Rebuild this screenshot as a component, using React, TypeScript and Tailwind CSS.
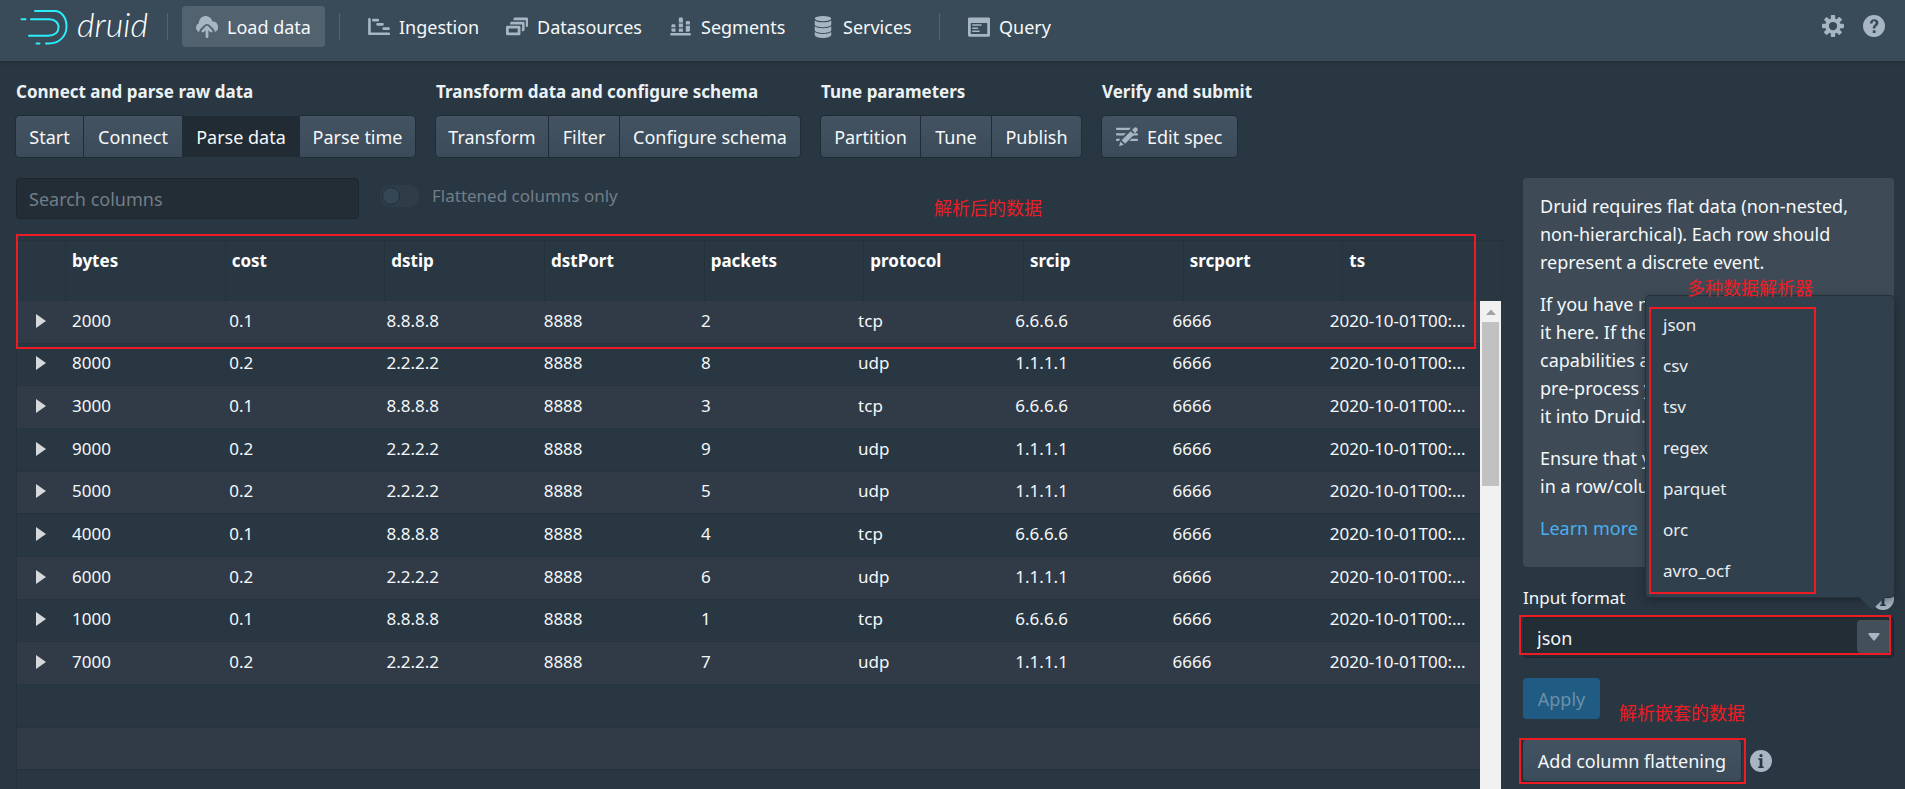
import React from "react";

const FONT = "font-['Noto_Sans','Noto_Sans_CJK_SC',sans-serif]";

const BUTTON =
  "bg-linear-to-b from-[#435361] to-[#3b4b59] text-[#f5f8fa] shadow-[0_0_0_1px_#212c35]";

function Icon({ children, className = "size-[22px] text-[#a7b6c2]" }: { children: React.ReactNode; className?: string }) {
  return (
    <svg viewBox="0 0 16 16" fill="currentColor" aria-hidden="true" className={`shrink-0 ${className}`}>
      {children}
    </svg>
  );
}

const UploadIcon = () => (
  <Icon>
    <path d="M8.71 7.29a1 1 0 0 0-1.42 0l-3 3a1 1 0 0 0 1.42 1.42L7 10.41V15a1 1 0 0 0 2 0v-4.59l1.29 1.29a1 1 0 0 0 1.42-1.42l-3-3z" />
    <path d="M12 4h-.1A5 5 0 0 0 2 5c0 .11.01.22.02.33A3.5 3.5 0 0 0 .9 10.8c.4.5.9.85 1.45 1.03-.15-.75.1-1.6.8-2.3l3-3c.5-.5 1.15-.78 1.85-.78s1.35.28 1.85.78l3 3c.6.6.85 1.4.75 2.17A4 4 0 0 0 12 4z" />
  </Icon>
);
const GanttIcon = () => (
  <Icon>
    <path d="M1 1.5c.55 0 1 .4 1 .9V12h13.2a.9.9 0 0 1 0 1.9H1a.9.9 0 0 1-.9-.9V2.4c0-.5.4-.9.9-.9z" />
    <rect x="3" y="2" width="5" height="2" rx=".8" />
    <rect x="6" y="5" width="5.5" height="2" rx=".8" />
    <rect x="10.5" y="8.2" width="5.4" height="2" rx=".8" />
  </Icon>
);
const MultiSelectIcon = () => (
  <Icon>
    <path fillRule="evenodd" d="M1 7h8.5a1 1 0 0 1 1 1v5a1 1 0 0 1-1 1H1a1 1 0 0 1-1-1V8a1 1 0 0 1 1-1zm1 2v3h6.5V9H2z" />
    <path d="M4 4.2h8.5a1 1 0 0 1 1 1V10a1 1 0 0 1-1 1h-1V9h.2V6.2H3V5.2a1 1 0 0 1 1-1z" />
    <path d="M6.5 1H15a1 1 0 0 1 1 1v5a1 1 0 0 1-1 1h-.6V3H5.5V2a1 1 0 0 1 1-1z" />
  </Icon>
);
const SegmentsIcon = () => (
  <Icon>
    <rect x="0.2" y="12.4" width="15" height="1.8" rx=".9" />
    <path d="M1 9h3v2.4H2a1 1 0 0 1-1-1V9zM2 6h1a1 1 0 0 1 1 1v1.2H1V7a1 1 0 0 1 1-1zM6.4 9h3v2.4h-3zM6.4 5.5h3v2.7h-3zM7.4 1h1a1 1 0 0 1 1 1v2.7h-3V2a1 1 0 0 1 1-1zM11.5 7h3v3.4a1 1 0 0 1-1 1h-2V7zM12.5 3.6h1a1 1 0 0 1 1 1v1.6h-3V4.6a1 1 0 0 1 1-1z" />
  </Icon>
);
const DatabaseIcon = () => (
  <Icon>
    <ellipse cx="8" cy="1.9" rx="6" ry="1.9" />
    <path d="M2 3.2c1 .9 3.4 1.4 6 1.4s5-.5 6-1.4v3.1c-.4 1-3 1.8-6 1.8s-5.600-.8-6-1.800V3.200zM2 7.500c1 .9 3.400 1.400 6 1.400s5-.5 6-1.400v3c-.4 1-3 1.800-6 1.800s-5.600-.8-6-1.800v-3zM2 11.700c1 .9 3.400 1.400 6 1.400s5-.5 6-1.400v2.300c-.4 1.100-3 2-6 2s-5.600-.9-6-2v-2.300z" />
  </Icon>
);
const ApplicationIcon = () => (
  <Icon>
    <path fillRule="evenodd" d="M1 1h14a1 1 0 0 1 1 1v12a1 1 0 0 1-1 1H1a1 1 0 0 1-1-1V2a1 1 0 0 1 1-1zm1 4v8h12V5H2z" />
    <rect x="3" y="6" width="7" height="1.1" rx=".5" />
    <rect x="3" y="8.300" width="4.500" height="1.100" rx=".5" />
    <rect x="3" y="10.600" width="5.500" height="1.100" rx=".5" />
  </Icon>
);
const CogIcon = () => (
  <Icon>
    <path d="M15.190 6.390h-1.850c-.11-.37-.27-.71-.45-1.040l1.360-1.360c.31-.31.31-.82 0-1.130l-1.130-1.130c-.31-.31-.82-.31-1.130 0l-1.360 1.360c-.33-.17-.67-.33-1.040-.44V.8c0-.44-.36-.8-.8-.8h-1.600c-.44 0-.8.36-.8.8v1.850c-.39.12-.75.28-1.100.47l-1.300-1.300c-.3-.3-.79-.3-1.090 0L1.820 2.910c-.3.3-.3.79 0 1.090l1.300 1.300c-.2.34-.36.7-.48 1.090H.8c-.44 0-.8.36-.8.8v1.600c0 .44.36.8.8.8h1.850c.11.37.27.71.45 1.040l-1.360 1.360c-.31.31-.31.82 0 1.130l1.130 1.130c.31.31.82.31 1.130 0l1.360-1.360c.33.18.67.33 1.040.44v1.860c0 .44.36.8.8.8h1.600c.44 0 .8-.36.8-.8v-1.860c.39-.12.75-.28 1.100-.47l1.300 1.300c.3.3.79.3 1.090 0l1.090-1.090c.3-.3.3-.79 0-1.090l-1.300-1.300c.19-.35.36-.71.48-1.100h1.850c.44 0 .8-.36.8-.8v-1.600a.816.816 0 0 0-.82-.79zM8 11a3 3 0 1 1 0-6 3 3 0 0 1 0 6z" />
  </Icon>
);
const HelpIcon = () => (
  <Icon>
    <path fillRule="evenodd" d="M8 0a8 8 0 1 0 0 16A8 8 0 0 0 8 0zm-.9 11h2v2h-2v-2zM5 6.100h1.900c0-1 .4-1.600 1.200-1.600.7 0 1.100.4 1.100 1.100 0 .6-.3 1-.9 1.500-.9.700-1.200 1.400-1.200 2.700h1.800c0-.8.3-1.200 1-1.800.8-.6 1.300-1.400 1.300-2.400C11.200 4 10 3 8.200 3 6.200 3 5.100 4.200 5 6.100z" />
  </Icon>
);
const InfoIcon = () => (
  <Icon>
    <path fillRule="evenodd" d="M8 0a8 8 0 1 0 0 16A8 8 0 0 0 8 0zM7 3h2v2H7V3zm3 10H6v-1h1V7H6V6h3v6h1v1z" />
  </Icon>
);
const EditSpecIcon = () => (
  <Icon>
    <path d="M.7 1.200h10.200L9.400 2.900H.7a.85.85 0 0 1 0-1.700zM.7 5.200h6.500L5.600 6.900H.7a.85.85 0 0 1 0-1.700zM.7 9.200h2.500L2 10.900H.7a.85.85 0 0 1 0-1.700zM12.700 5.200h2.600a.85.85 0 0 1 0 1.700h-4.200zM11.300 9.200h4a.85.85 0 0 1 0 1.700H9.700z" />
    <path d="M2.200 14.800l1-3.500 2.400 2.400zM4.100 10.400l6.600-6.600 2.500 2.500-6.600 6.600zM11.600 2.900l1.500-1.500c.7-.7 1.600-.7 2.200 0 .7.7.7 1.600 0 2.300l-1.400 1.500z" />
  </Icon>
);

function Logo() {
  return (
    <a href="#home" className="flex h-[54px] w-[151px] shrink-0 items-center gap-[7px]">
      <svg viewBox="0 0 50 36" className="ml-[4px] h-[36px] w-[50px] shrink-0" fill="none" stroke="#2ceefb" strokeWidth="2" strokeLinecap="round" aria-hidden="true">
        <path d="M15 2h19.500C42 2 47 9.500 46.500 18.500S39 34.500 29 34.500h-3M16.500 34.500h3M11 10.300h18.500c5.500 0 9.500 3.500 9 8.700s-4.500 7.700-10.500 7.700H9M1.500 10.300h4" />
      </svg>
      <span className="pb-[6px] font-['Lato',sans-serif] text-[34px] leading-8 font-light text-white italic">druid</span>
    </a>
  );
}

const Divider = () => <div className="h-[27px] w-px shrink-0 bg-[#55636f]" />;

const NAV = [
  { label: "Ingestion", icon: <GanttIcon />, width: "w-[138px]" },
  { label: "Datasources", icon: <MultiSelectIcon />, width: "w-[164px]" },
  { label: "Segments", icon: <SegmentsIcon />, width: "w-[142px]" },
  { label: "Services", icon: <DatabaseIcon />, width: "w-[127px]" },
];

function NavLink({ label, icon, className }: { label: string; icon: React.ReactNode; className: string }) {
  return (
    <a href={`#${label.toLowerCase()}`} className={`flex h-[41px] items-center gap-[9px] rounded px-[14px] whitespace-nowrap ${className}`}>
      {icon}
      {label}
    </a>
  );
}

function Header() {
  return (
    <header className="relative flex h-[62px] shrink-0 items-start border-b border-[#222e38] bg-[#394b59] pr-[20px] pl-[16px] shadow-[0_1px_2px_#1f2a3388]">
      <Logo />
      <nav aria-label="Main" className="flex flex-1 items-center pt-[6px]">
        <Divider />
        <NavLink label="Load data" icon={<UploadIcon />} className="mx-[14px] w-[143px] bg-[#52626f]" />
        <Divider />
        <div className="mx-[14px] flex">
          {NAV.map((n) => (
            <NavLink key={n.label} label={n.label} icon={n.icon} className={n.width} />
          ))}
        </div>
        <Divider />
        <NavLink label="Query" icon={<ApplicationIcon />} className="ml-[14px]" />
      </nav>
      <div className="flex h-[52px] items-center gap-[19px]">
        <button type="button" aria-label="Settings"><CogIcon /></button>
        <button type="button" aria-label="Help"><HelpIcon /></button>
      </div>
    </header>
  );
}

const STEPS = [
  {
    title: "Connect and parse raw data",
    items: [
      { label: "Start", width: "w-[67px]" },
      { label: "Connect", width: "w-[98px]" },
      { label: "Parse data", width: "w-[116px]", active: true },
      { label: "Parse time", width: "w-[115px]" },
    ],
  },
  {
    title: "Transform data and configure schema",
    items: [
      { label: "Transform", width: "w-[112px]" },
      { label: "Filter", width: "w-[70px]" },
      { label: "Configure schema", width: "w-[180px]" },
    ],
  },
  {
    title: "Tune parameters",
    items: [
      { label: "Partition", width: "w-[99px]" },
      { label: "Tune", width: "w-[70px]" },
      { label: "Publish", width: "w-[89px]" },
    ],
  },
];

const STEP_TITLE = "mb-[12px] h-6 text-[17px] leading-6 font-bold whitespace-nowrap text-[#ebf1f5]";

function Steps() {
  return (
    <div className="flex shrink-0 gap-[21px] px-[16px] pt-[18px]">
      {STEPS.map((group) => (
        <section key={group.title}>
          <h2 className={STEP_TITLE}>{group.title}</h2>
          <div className="flex gap-px">
            {group.items.map((s) => (
              <button
                key={s.label}
                type="button"
                className={`h-[41px] whitespace-nowrap first:rounded-l last:rounded-r ${s.width} ${
                  "active" in s ? "bg-[#202b33] text-[#f5f8fa]" : BUTTON
                }`}
              >
                {s.label}
              </button>
            ))}
          </div>
        </section>
      ))}
      <section>
        <h2 className={STEP_TITLE}>Verify and submit</h2>
        <button type="button" className={`flex h-[41px] w-[135px] items-center gap-[9px] rounded px-[14px] whitespace-nowrap ${BUTTON}`}>
          <EditSpecIcon />
          Edit spec
        </button>
      </section>
    </div>
  );
}

const COLUMNS = ["bytes", "cost", "dstip", "dstPort", "packets", "protocol", "srcip", "srcport", "ts"];

const tcp = (bytes: string, packets: string) => [bytes, "0.1", "8.8.8.8", "8888", packets, "tcp", "6.6.6.6", "6666", "2020-10-01T00:..."];
const udp = (bytes: string, packets: string) => [bytes, "0.2", "2.2.2.2", "8888", packets, "udp", "1.1.1.1", "6666", "2020-10-01T00:..."];

const ROWS: string[][] = [
  tcp("2000", "2"),
  udp("8000", "8"),
  tcp("3000", "3"),
  udp("9000", "9"),
  udp("5000", "5"),
  tcp("4000", "4"),
  udp("6000", "6"),
  tcp("1000", "1"),
  udp("7000", "7"),
  [],
  [],
  [],
];

function Note({ children, className }: { children: React.ReactNode; className: string }) {
  return (
    <span lang="zh" className={`pointer-events-none absolute z-20 font-['Noto_Sans_CJK_SC',sans-serif] text-[18px] leading-6 whitespace-nowrap text-[#ed1c24] ${className}`}>
      {children}
    </span>
  );
}

const Outline = ({ className }: { className: string }) => (
  <div className={`pointer-events-none absolute z-20 border-2 border-[#ed1c24] ${className}`} />
);

function DataTable() {
  return (
    <div className="relative mt-[21px] flex min-h-0 flex-1 flex-col">
      <Note className="top-[-45px] left-[918px]">解析后的数据</Note>
      <Outline className="-top-[6px] right-[27px] left-0 h-[115px]" />
      <table className="flex min-h-0 flex-1 flex-col overflow-hidden border-t border-l border-[#25323c] text-left text-[17px]">
        <thead className="block shrink-0 border-r border-[#25323c]">
          <tr className="grid h-[60px] grid-cols-[48px_repeat(9,minmax(0,1fr))]">
            <th aria-label="Expand" />
            {COLUMNS.map((c) => (
              <th key={c} scope="col" className="border-l border-[#25323c] pt-[6px] pl-[6px] leading-7 font-bold text-white">{c}</th>
            ))}
          </tr>
        </thead>
        <tbody className="mr-[23px] grid h-[512px] shrink-0 grid-rows-12">
          {ROWS.map((r, i) => (
            <tr key={i} className="grid grid-cols-[48px_repeat(9,minmax(0,1fr))] items-center border-b border-[#27333d] pb-[2px] odd:bg-[#303b47]">
              <td className="pl-[19px]">
                {r.length > 0 && (
                  <button type="button" aria-label="Expand row" className="block">
                    <svg viewBox="0 0 10 14" className="h-[14px] w-[10px]" fill="#d6d9dc" aria-hidden="true">
                      <path d="M0 0l10 7-10 7z" />
                    </svg>
                  </button>
                )}
              </td>
              {r.map((v, j) => (
                <td key={j} className="pl-[7px] whitespace-nowrap">{v}</td>
              ))}
            </tr>
          ))}
        </tbody>
      </table>
      <div aria-hidden="true" className="absolute top-[61px] right-[2px] bottom-0 flex w-[21px] flex-col items-center bg-[#f1f1f1]">
        <svg viewBox="0 0 21 21" className="size-[21px]" fill="#a3a3a3">
          <path d="M6 14h10l-5-5.500z" />
        </svg>
        <div className="h-[164px] w-[17px] bg-[#c1c1c1]" />
      </div>
    </div>
  );
}

function Toolbar() {
  return (
    <div className="flex h-[41px] shrink-0">
      <input
        type="text"
        aria-label="Search columns"
        placeholder="Search columns"
        className="h-[41px] w-[343px] rounded border border-[#1d262d] bg-[#232d36] px-[12px] placeholder:text-[#717e88] focus:outline-none"
      />
      <label className="ml-[21px] flex h-[36px] items-center gap-[13px] text-[17px] text-[#717e88]">
        <span className="flex h-[22px] w-[39px] items-center rounded-full bg-[#2f3d49] px-[2px]">
          <input type="checkbox" disabled className="size-[18px] appearance-none rounded-full border border-[#22303a] bg-[#354655]" />
        </span>
        Flattened columns only
      </label>
    </div>
  );
}

const FORMATS = ["json", "csv", "tsv", "regex", "parquet", "orc", "avro_ocf"];

function FormatMenu() {
  return (
    <div className="absolute right-0 bottom-[8px] z-10 h-[301px] w-[248px] rounded bg-[#30404d] pt-[8px] shadow-[0_0_0_1px_#25313b,0_3px_10px_#10161a88]">
      <Note className="-top-[21px] left-[41px]">多种数据解析器</Note>
      <Outline className="top-[11px] left-[3px] h-[287px] w-[167px]" />
      <ul>
        {FORMATS.map((f) => (
          <li key={f} className="h-[41px]">
            <button type="button" className="flex h-full w-full items-center px-[17px] text-[17px] text-[#e9edf0]">{f}</button>
          </li>
        ))}
      </ul>
      <svg viewBox="0 0 28 13" className="absolute right-[8px] -bottom-[12px] h-[13px] w-[28px]" fill="#30404d" aria-hidden="true">
        <path d="M0 0h28L16.500 11.500q-2.500 2.500-5 0z" />
      </svg>
    </div>
  );
}

function Sidebar() {
  return (
    <aside className="flex w-[371px] shrink-0 flex-col">
      <div className="h-[389px] shrink-0 rounded bg-[#3e4b56] px-[17px] py-[14px] leading-7">
        <p className="mb-[14px]">Druid requires flat data (non-nested,<br />non-hierarchical). Each row should<br />represent a discrete event.</p>
        <p className="mb-[14px]">If you have nested data, you can flatten<br />it here. If the provided flattening<br />capabilities are not sufficient, please<br />pre-process your data before ingesting<br />it into Druid.</p>
        <p className="mb-[14px]">Ensure that your data appears correctly<br />in a row/column orientation.</p>
        <a href="#learn" className="text-[#48aff0]">Learn more</a>
      </div>
      <div className="relative mt-[18px] mb-[4px] flex h-[28px] shrink-0 items-center justify-between">
        <label htmlFor="input-format" className="pb-[2px] text-[17px]">Input format</label>
        <button type="button" aria-label="Input format help"><InfoIcon /></button>
        <div className="absolute right-0 bottom-[8px]">
          <FormatMenu />
        </div>
      </div>
      <div className="relative flex h-[41px] shrink-0 items-start rounded border border-[#1d262d] bg-[#232d36]">
        <Outline className="-top-[3px] right-[2px] -left-[5px] h-[40px]" />
        <input id="input-format" type="text" defaultValue="json" className="h-full min-w-0 flex-1 bg-transparent px-[13px] focus:outline-none" />
        <button type="button" aria-label="Show formats" className="mt-[2px] mr-[3px] flex h-[33px] w-[33px] items-center justify-center rounded bg-[#434f59]">
          <svg viewBox="0 0 12 8" className="h-[8px] w-[12px]" fill="#a7b6c2" aria-hidden="true">
            <path d="M1 0h10q1 .6.400 1.500L7 7q-1 1-2 0L.6 1.500Q0 .6 1 0z" />
          </svg>
        </button>
      </div>
      <div className="relative mt-[20px] flex shrink-0">
        <button type="button" disabled className="h-[41px] w-[77px] rounded bg-[#1f5b82] text-[#6a90aa]">Apply</button>
        <Note className="top-[22px] left-[96px]">解析嵌套的数据</Note>
      </div>
      <div className="relative mt-[21px] mb-[8px] flex shrink-0 items-center gap-[9px]">
        <Outline className="-top-[2px] -left-[4px] h-[46px] w-[227px]" />
        <button type="button" className={`h-[41px] w-[218px] rounded whitespace-nowrap ${BUTTON}`}>Add column flattening</button>
        <button type="button" aria-label="Flattening help"><InfoIcon /></button>
      </div>
    </aside>
  );
}

export default function App() {
  return (
    <div className={`flex h-screen flex-col overflow-hidden bg-[#293742] text-[18px] leading-7 text-[#f5f8fa] ${FONT}`}>
      <Header />
      <Steps />
      <main className="flex min-h-0 flex-1 gap-[20px] pt-[21px] pr-[11px] pl-[16px]">
        <div className="flex min-w-0 flex-1 flex-col">
          <Toolbar />
          <DataTable />
        </div>
        <Sidebar />
      </main>
    </div>
  );
}
